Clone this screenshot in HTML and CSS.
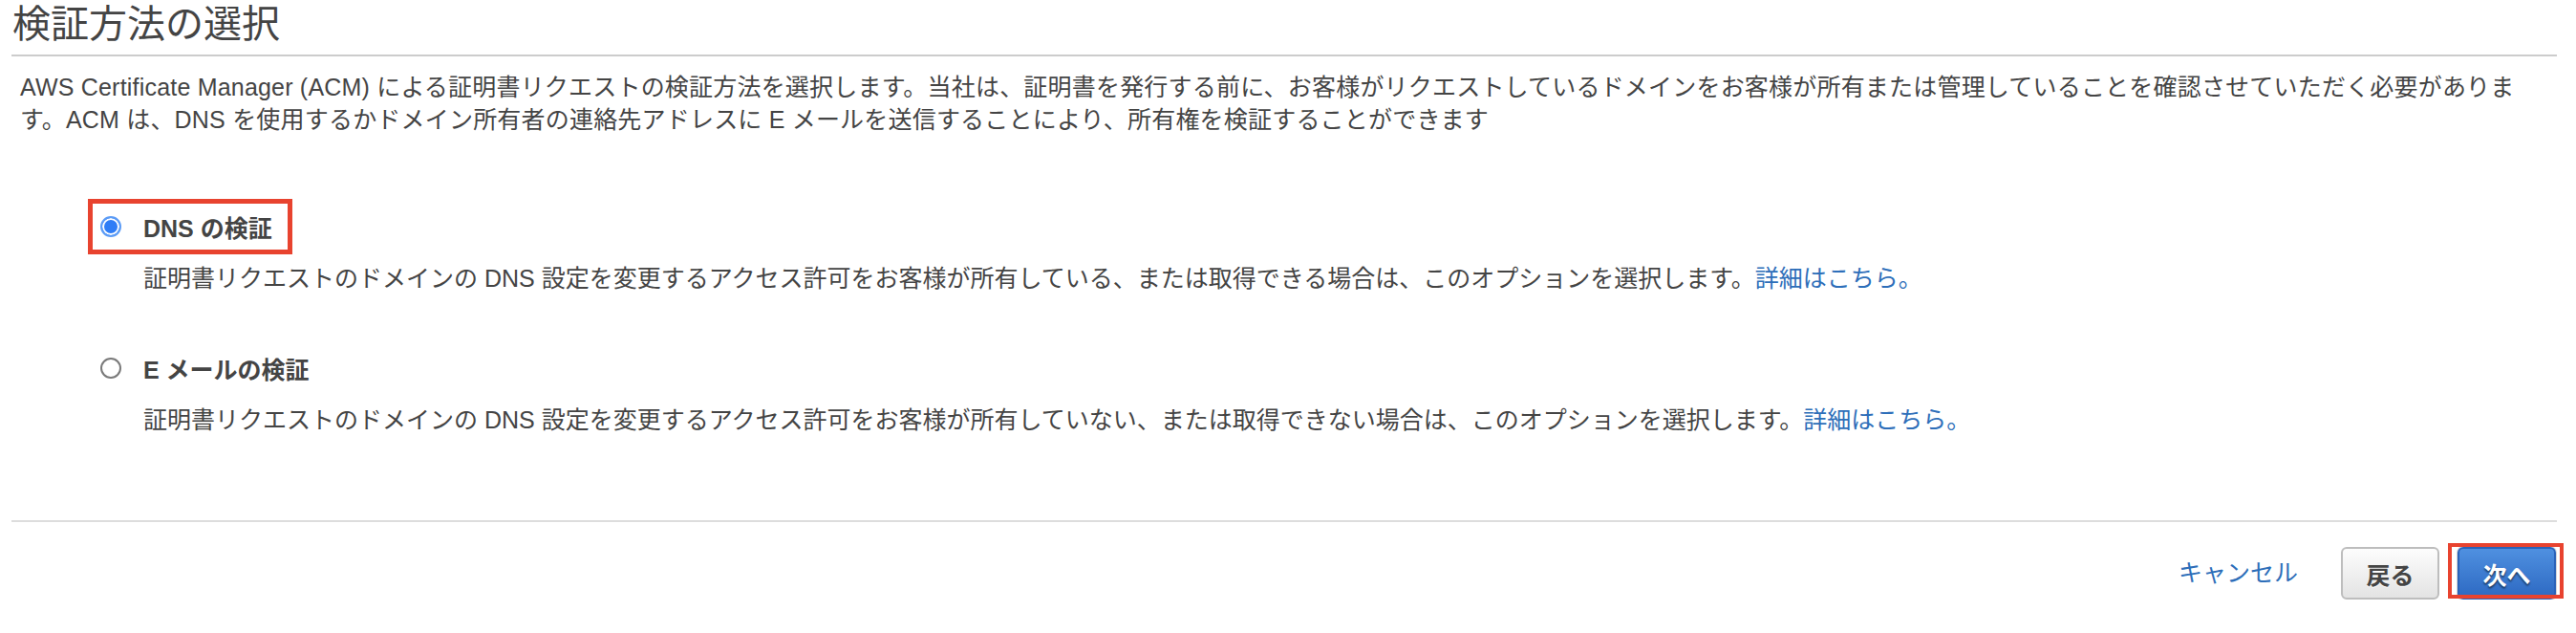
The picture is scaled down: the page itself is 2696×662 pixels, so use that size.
FILE: index.html
```html
<!DOCTYPE html>
<html>

	<head>
		<meta charset="UTF-8">
		<title>検証方法の選択</title>
		<link rel="stylesheet" href="styles.css">
	</head>

	<body>
		<div class="wrap">
			<h1 class="title">検証方法の選択</h1>

			<p class="intro">AWS Certificate Manager (ACM) による証明書リクエストの検証方法を選択します。当社は、証明書を発行する前に、お客様がリクエストしているドメインをお客様が所有または管理していることを確認させていただく必要があります。ACM は、DNS を使用するかドメイン所有者の連絡先アドレスに E メールを送信することにより、所有権を検証することができます</p>

			<ul class="options">
				<li>
					<label class="choice marked">
						<span class="radio checked"></span>
						<span class="name">DNS の検証</span>
					</label>
					<p class="hint">証明書リクエストのドメインの DNS 設定を変更するアクセス許可をお客様が所有している、または取得できる場合は、このオプションを選択します。<a href="#">詳細はこちら。</a></p>
				</li>
				<li>
					<label class="choice">
						<span class="radio"></span>
						<span class="name">E メールの検証</span>
					</label>
					<p class="hint">証明書リクエストのドメインの DNS 設定を変更するアクセス許可をお客様が所有していない、または取得できない場合は、このオプションを選択します。<a href="#">詳細はこちら。</a></p>
				</li>
			</ul>

			<div class="footer">
				<a class="cancel" href="#">キャンセル</a>
				<button class="btn">戻る</button>
				<span class="note"><button class="btn primary">次へ</button></span>
			</div>
		</div>
	</body>

</html>
```

FILE: styles.css
```css
* {
	margin: 0;
	padding: 0;
	border: 0;
	box-sizing: border-box;
}

body {
	font-family: "Liberation Sans", "Noto Sans CJK JP", sans-serif;
	font-size: 25px;
	color: #444;
	background: #fff;
}

a {
	color: #2d6eb9;
	text-decoration: none;
}

.wrap {
	padding: 0 20px 0 12px;
}

.title {
	font-size: 40px;
	font-weight: normal;
	line-height: 50px;
	padding: 0 0 7px 1px;
	border-bottom: 2px solid #ccc;
}

.intro {
	margin-top: 15px;
	padding: 0 36px 0 9px;
	line-height: 34px;
	letter-spacing: 0.2px;
}

.options {
	list-style: none;
	margin-top: 66px;
	padding-left: 80px;
}

.options li + li {
	margin-top: 48px;
}

.choice {
	display: inline-flex;
	align-items: center;
	height: 58px;
	padding: 0 16px 0 8px;
	border: 5px solid transparent;
	font-weight: bold;
}

/* red annotation frame */
.choice.marked {
	border-color: #e8432f;
}

.radio {
	width: 22px;
	height: 22px;
	margin-right: 23px;
	border-radius: 50%;
	border: 2px solid #7a7a7a;
	background: #fff;
}

.radio.checked {
	border: 2px solid #5c9cf6;
	background: #2f7df6;
	box-shadow: inset 0 0 0 2px #fff;
}

.hint {
	margin: 8px 0 0 58px;
	line-height: 34px;
}

.footer {
	display: flex;
	justify-content: flex-end;
	align-items: center;
	margin-top: 88px;
	padding: 26px 1px 0 0;
	border-top: 2px solid #ddd;
}

.cancel {
	margin-right: 45px;
	margin-top: -5px;
}

.btn {
	width: 103px;
	height: 55px;
	border-radius: 6px;
	font-family: "Liberation Sans", "Noto Sans CJK JP", sans-serif;
	font-size: 25px;
	font-weight: bold;
	color: #444;
	border: 2px solid #bdbdbd;
	background: linear-gradient(#fdfdfd, #e3e3e3);
	text-shadow: 0 1px 0 #fff;
}

.btn.primary {
	color: #fff;
	border-color: #2a62b9;
	background: linear-gradient(#4f90e0, #2d69c2);
	text-shadow: 0 2px 2px rgba(0, 0, 0, 0.55);
	box-shadow: 0 0 0 1px #d6d6d6;
}

.note {
	position: relative;
	display: inline-block;
	margin-left: 19px;
	line-height: 0;
}

.note::after {
	content: '';
	position: absolute;
	top: -4px;
	right: -8px;
	bottom: 1px;
	left: -10px;
	border: 4px solid #e8432f;
	pointer-events: none;
}
```
